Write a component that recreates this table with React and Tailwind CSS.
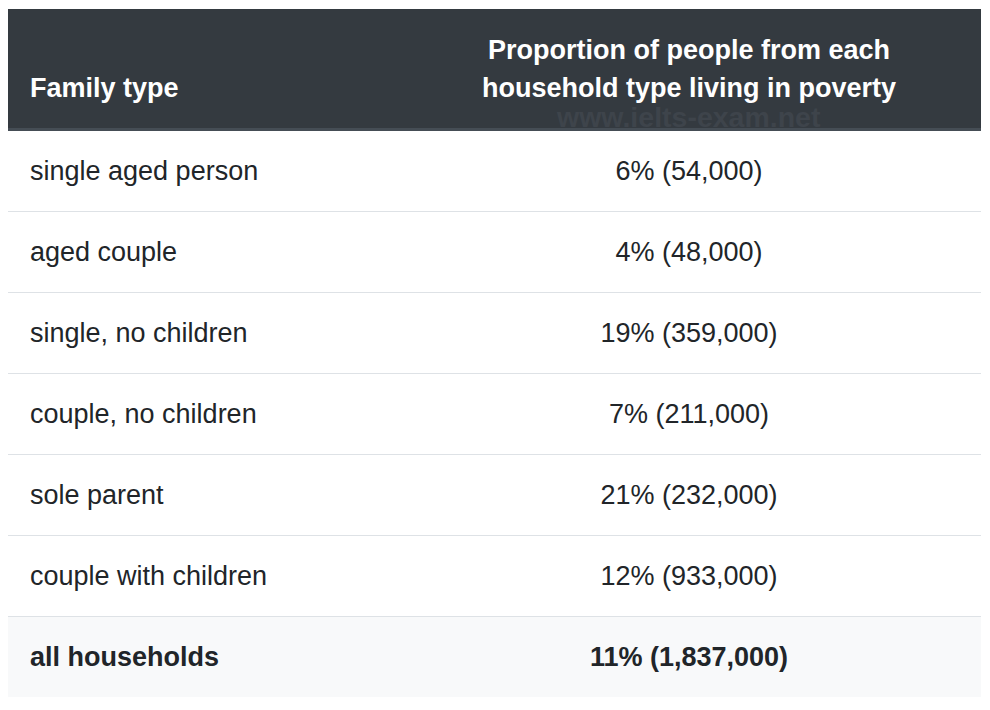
const rows = [
  ["single aged person", "6% (54,000)"],
  ["aged couple", "4% (48,000)"],
  ["single, no children", "19% (359,000)"],
  ["couple, no children", "7% (211,000)"],
  ["sole parent", "21% (232,000)"],
  ["couple with children", "12% (933,000)"],
];

const App = () => {
  return (
    <main className="min-h-screen bg-white pl-[8px] pt-[9px] font-['Liberation_Sans',Arial,sans-serif] text-[27px] leading-[38px] text-[#212529]">
      <div className="relative w-[973px]">
        <table className="w-full border-collapse">
          <thead>
            <tr className="bg-[#343a40] text-white">
              <th className="w-[389px] border-b-[3px] border-[#454d55] px-[22px] pt-[22px] pb-[21px] text-left align-bottom font-bold">
                Family type
              </th>
              <th className="border-b-[3px] border-[#454d55] px-[22px] pt-[22px] pb-[21px] text-center align-bottom font-bold">
                Proportion of people from each
                <br />
                household type living in poverty
              </th>
            </tr>
          </thead>
          <tbody>
            {rows.map(([type, value], i) => (
              <tr key={type}>
                <td className={`px-[22px] py-[21px] ${i > 0 ? "border-t border-[#dee2e6]" : ""}`}>{type}</td>
                <td className={`px-[22px] py-[21px] text-center ${i > 0 ? "border-t border-[#dee2e6]" : ""}`}>{value}</td>
              </tr>
            ))}
            <tr className="bg-[#f8f9fa] font-bold">
              <td className="border-t border-[#dee2e6] px-[22px] py-[21px]">all households</td>
              <td className="border-t border-[#dee2e6] px-[22px] py-[21px] text-center">11% (1,837,000)</td>
            </tr>
          </tbody>
        </table>
        <div className="pointer-events-none absolute left-[549px] top-[94px] text-[28.5px] leading-[29px] font-bold text-[#3e444b]">
          www.ielts-exam.net
        </div>
      </div>
    </main>
  );
};

export default App;
